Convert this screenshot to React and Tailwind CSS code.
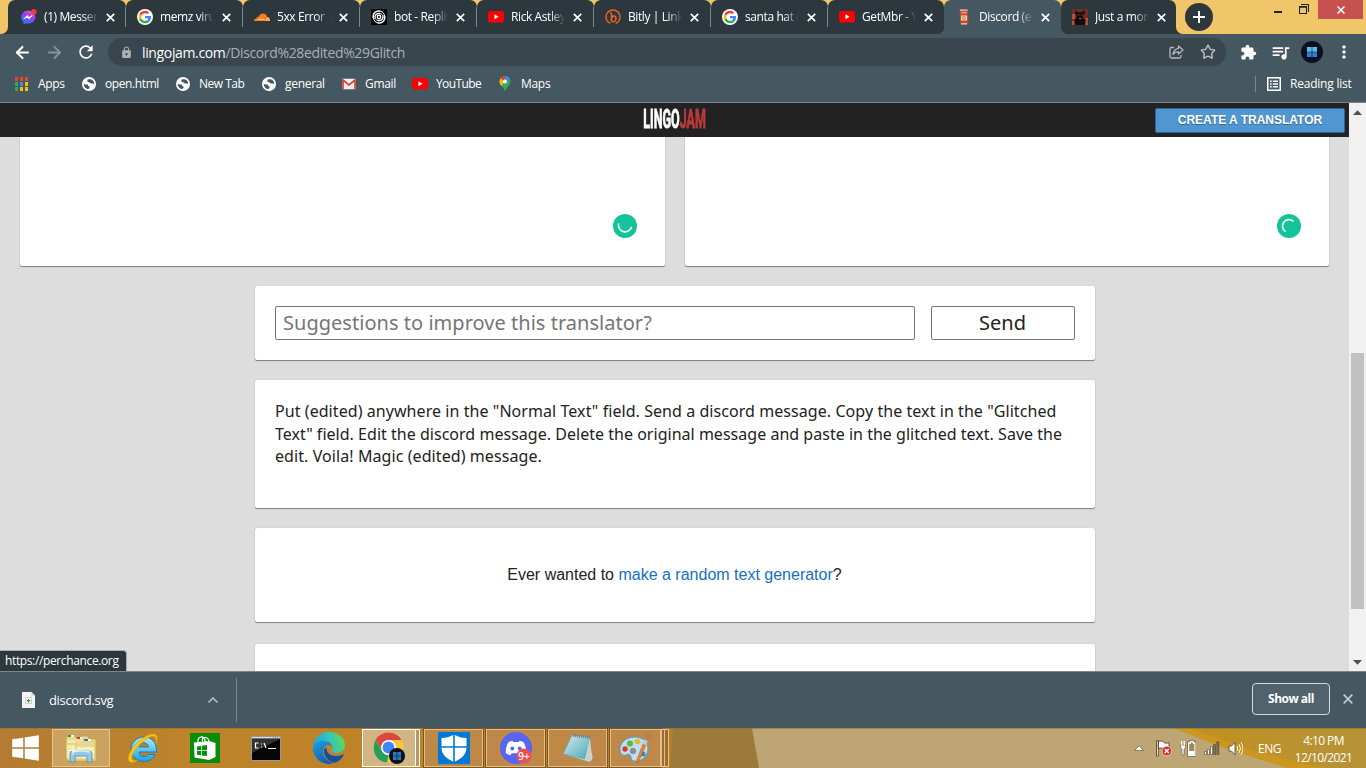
import React from "react";
import { ArrowLeft, ArrowRight, Star } from "lucide-react";
import { MdRefresh, MdExtension, MdQueueMusic, MdMoreVert, MdLock } from "react-icons/md";

const UI = "font-['Open_Sans','Noto_Sans',sans-serif]";

function GoogleIcon() {
  return (
    <svg width="16" height="16" viewBox="0 0 48 48" className="shrink-0">
      <circle cx="24" cy="24" r="24" fill="#fff" />
      <g transform="translate(5 5) scale(.79)">
        <path fill="#ea4335" d="M24 9.5c3.5 0 6.700 1.200 9.200 3.600l6.900-6.900C35.900 2.400 30.500 0 24 0 14.600 0 6.500 5.400 2.600 13.200l8 6.200C12.400 13.700 17.700 9.500 24 9.500z" />
        <path fill="#4285f4" d="M47 24.500c0-1.600-.2-3.100-.4-4.500H24v9h12.900c-.6 3-2.200 5.500-4.800 7.200l7.700 6C44.400 38 47 32 47 24.500z" />
        <path fill="#fbbc05" d="M10.500 28.600c-.5-1.500-.8-3-.8-4.600s.3-3.100.8-4.600l-8-6.200C.9 16.500 0 20.100 0 24s.9 7.500 2.600 10.800z" />
        <path fill="#34a853" d="M24 48c6.500 0 11.900-2.100 15.900-5.800l-7.700-6c-2.200 1.500-4.900 2.300-8.200 2.300-6.300 0-11.600-4.200-13.500-9.900l-8 6.200C6.500 42.600 14.600 48 24 48z" />
      </g>
    </svg>
  );
}

function YouTubeIcon() {
  return (
    <svg width="16" height="16" viewBox="0 0 16 16" className="shrink-0">
      <rect x="0" y="2" width="16" height="11.500" rx="2.800" fill="#f00" />
      <path d="M6.400 5.300v5l4.200-2.500z" fill="#fff" />
    </svg>
  );
}

function MessengerIcon() {
  return (
    <svg width="16" height="16" viewBox="0 0 16 16" className="shrink-0">
      <defs>
        <linearGradient id="msg" x1="0.200" y1="1" x2="0.800" y2="0">
          <stop offset="0" stopColor="#1687ff" />
          <stop offset="0.550" stopColor="#8f3dfb" />
          <stop offset="1" stopColor="#ff5e78" />
        </linearGradient>
      </defs>
      <path d="M7.300 1.400C3.300 1.400.3 4.200.3 8c0 2 .8 3.700 2.200 4.900V15.500l2.100-1.200c.9.200 1.700.3 2.700.3 4 0 7-2.800 7-6.600S11.300 1.400 7.300 1.400z" fill="url(#msg)" />
      <path d="M3 9.800l3-3.300 2.200 1.800 3-1.900-3 3.500-2.200-1.700z" fill="#fff" stroke="#fff" strokeWidth=".7" />
      <circle cx="12.900" cy="2.700" r="2.700" fill="#ef3b3b" />
    </svg>
  );
}

function CloudflareIcon() {
  return (
    <svg width="16" height="16" viewBox="0 0 16 16" className="shrink-0">
      <path d="M0 12c0-1.700 1-2.600 2.600-2.600C2.800 7.800 4 7.600 4.700 8c.8-2.500 2.300-3.600 4.300-3.600 2.300 0 3.700 1.500 4 3.500C15 8 16 9.800 16 12z" fill="#f38020" />
      <path d="M12.800 8l-1.600 4H16c0-2.200-1-4-3.200-4z" fill="#faae40" />
      <path d="M3.600 10.400l7-.1" stroke="#fff" strokeWidth=".5" />
    </svg>
  );
}

function SwirlIcon() {
  return (
    <svg width="16" height="16" viewBox="0 0 16 16" className="shrink-0">
      <rect width="16" height="16" fill="#050505" />
      <g fill="none" stroke="#fff">
        <circle cx="8" cy="8" r="1.700" strokeWidth="1.400" />
        <path d="M2.300 9C1.300 4.500 5 1.200 9.500 2.300M4.200 9.800C3 6.400 6 3.500 9.300 4.600M13.700 7c1 4.500-2.700 7.800-7.200 6.700M11.800 6.200c1.200 3.400-1.800 6.300-5.100 5.200" strokeWidth="1.400" />
        <path d="M9.300 2.200c2.500.5 4.200 2.600 4.300 5M6.700 13.800c-2.500-.5-4.200-2.600-4.300-5M9 4.500c1.300.4 2.400 1.200 2.800 2M7 11.500c-1.300-.4-2.400-1.200-2.800-2" strokeWidth="1" />
      </g>
    </svg>
  );
}

function BitlyIcon() {
  return (
    <svg width="16" height="16" viewBox="0 0 16 16" className="shrink-0" fill="none" stroke="#ee6123" strokeWidth="1.500">
      <path d="M5.500 14.300C2.800 13.300 1 10.900 1 8a7 7 0 0 1 14 0c0 2.900-1.800 5.300-4.300 6.300" />
      <path d="M5 3.800c1.200-.2 1.500.7 1.500 1.700v6" />
      <path d="M6.500 12V9.500c0-1.700 1-2.600 2.300-2.600 1.400 0 2.200 1 2.200 2.500 0 1.900-1.500 3.300-2.800 3.300-1 0-1.700-.3-1.700-.9z" />
    </svg>
  );
}

function CanIcon() {
  return (
    <svg width="16" height="16" viewBox="0 0 16 16" className="shrink-0">
      <path d="M4 .8h7.500l.5 1.700-.5 4 1 .5-.3 7-1 1.500H5L4.200 14 4 8 3.500 2z" fill="#cf4430" />
      <path d="M4 .5h7.500v1.300H4zM5 14.200h6v1.300H5z" fill="#dfd3c2" />
      <path d="M5 6.500h6v5H5z" fill="#ece2bd" />
      <path d="M5.200 3.800h5.500" stroke="#eecab0" strokeWidth="1" />
      <path d="M5.800 8h4M6.200 10h4" stroke="#8c5a38" strokeWidth=".8" />
    </svg>
  );
}

function DemonIcon() {
  return (
    <svg width="16" height="16" viewBox="0 0 16 16" className="shrink-0">
      <rect width="16" height="16" fill="#6e2e25" />
      <path d="M0 5h3v5H0zM13 9h3v7h-3zM0 12h2v4H0z" fill="#b85038" />
      <path d="M3.500 1l1.800 2.300h5L12.500 1l.3 3.500-1.800 1.700v2.300l2.700 2.500-.7 5H3.500L2.500 11l2-2.500.2-2.300L3 4.500z" fill="#120d0e" />
      <path d="M6 6h1.300M9 6h1.300M7 9.500h2.500" stroke="#e0402e" strokeWidth="1.100" />
    </svg>
  );
}

function GlobeIcon() {
  return (
    <svg width="14" height="14" viewBox="0 0 14 14" className="shrink-0">
      <circle cx="7" cy="7" r="7" fill="#fff" />
      <path d="M8.600 2.300H7.200C6 2.300 5.300 3 5.300 3.800c0 .9.400 1.400 1.500 1.500 1.200.1 1.200 1 2.400 1.100 1.200 0 2.300 0 3 .6.100-2.200-1.300-4.300-3.600-4.700zM1.700 6.400C1.600 8.600 2.800 11 5.200 11.900c1.300.4 2.300-.2 2.400-1.300.1-1-.6-1.200-1.200-1.500-.6-.4-.1-1.300-1-1.600-1.200-.3-2.600.1-3.700-1.100z" fill="#455760" />
    </svg>
  );
}

function AppsIcon() {
  const c = ["#ea4335", "#ea4335", "#ea4335", "#34a853", "#4285f4", "#fbbc05", "#34a853", "#fbbc05", "#fbbc05"];
  return (
    <svg width="14" height="14" viewBox="0 0 14 14" className="shrink-0">
      {c.map((f, i) => (
        <rect key={i} x={(i % 3) * 5} y={Math.floor(i / 3) * 5} width="3" height="4" fill={f} />
      ))}
    </svg>
  );
}

function GmailIcon() {
  return (
    <svg width="14" height="14" viewBox="0 0 14 14" className="shrink-0">
      <rect x="0" y="1.800" width="14" height="10.500" rx="1" fill="#f2f2f2" />
      <path d="M1 12V3l6 5 6-5v9" fill="none" stroke="#db3a2e" strokeWidth="1.700" />
      <path d="M2.500 12L6 8M11.500 12L8 8" stroke="#ccc" strokeWidth=".6" />
    </svg>
  );
}

function MapsIcon() {
  return (
    <svg width="14" height="16" viewBox="0 0 14 16" className="shrink-0">
      <path d="M7 15.800C6.500 13.500 5 12 3.500 10 2.300 8.500 1.500 7.300 1.500 5.500A5.500 5.500 0 0 1 12.500 5.500c0 1.900-.9 3.200-2 4.600C9 12 7.500 13.500 7 15.800z" fill="#34a853" />
      <path d="M2.700 2.200L7 5.500 3.400 10C2.200 8.400 1.500 7.300 1.500 5.500c0-1.300.5-2.400 1.200-3.300z" fill="#fbbc05" />
      <path d="M2.700 2.100C4 .5 6.500-.4 8.700.3L5 4.700z" fill="#ea4335" />
      <path d="M8.700.3c1.500.5 2.600 1.500 3.200 2.700L8.700 6.900 5.300 4.300z" fill="#4285f4" />
      <circle cx="7" cy="5.500" r="2" fill="#fff" />
    </svg>
  );
}

function Tab({ icon, title, shape, separator }) {
  return (
    <div className={"flex h-[34px] shrink-0 items-center rounded-t-[7px] " + shape}>
      {icon}
      <span className="ml-[7px] w-[54px] shrink-0 overflow-hidden whitespace-nowrap text-[12px] tracking-[-0.4px] text-white [mask-image:linear-gradient(90deg,#000_72%,transparent)]">
        {title}
      </span>
      <svg width="9" height="9" viewBox="0 0 9 9" className="ml-[8px] shrink-0">
        <path d="M.8.8l7.400 7.400M8.200.8L.8 8.200" stroke="#fff" strokeWidth="1.700" />
      </svg>
      {separator && <div className="ml-auto h-5 w-px bg-[#7d868b]" />}
    </div>
  );
}

const inner = "w-[117px] pl-[11px] bg-[#2d383e]";
const tabs = [
  [<MessengerIcon />, "(1) Messenger", "w-[118px] pl-[13px] bg-[#2d383e]"],
  [<GoogleIcon />, "memz virus", inner],
  [<CloudflareIcon />, "5xx Error | C", inner],
  [<SwirlIcon />, "bot - Replit", inner],
  [<YouTubeIcon />, "Rick Astley -", inner],
  [<BitlyIcon />, "Bitly | Link M", inner],
  [<GoogleIcon />, "santa hat d", inner],
  [<YouTubeIcon />, "GetMbr - Y", "w-[116px] pl-[11px] bg-[#2d383e]"],
];

function TabStrip() {
  return (
    <div className="flex h-[34px] bg-[#f0c668]">
      <div className="h-[34px] w-2 bg-[#2d383e]">
        <div className="h-full w-2 rounded-br-[7px] bg-[#f0c668]" />
      </div>
      <div className="flex bg-[linear-gradient(#f0c668_10px,#455760_10px)]">
        <div className="flex overflow-hidden rounded-br-[7px] bg-[linear-gradient(#f0c668_10px,#2d383e_10px)]">
          {tabs.map(([icon, title, shape], i) => (
            <Tab key={title} icon={icon} title={title} shape={shape} separator={i < tabs.length - 1} />
          ))}
        </div>
        <Tab icon={<CanIcon />} title="Discord (edi" shape="w-[117px] pl-[12px] bg-[#455760]" />
        <Tab icon={<DemonIcon />} title="Just a mom" shape="w-[115px] rounded-bl-[7px] pl-[11px] bg-[#2d383e]" />
      </div>
      <div className="h-[34px] w-2 bg-[#2d383e]">
        <div className="h-full w-2 rounded-bl-[7px] bg-[#f0c668]" />
      </div>
      <div className="mt-[3px] ml-px flex h-7 w-7 items-center justify-center rounded-full bg-[#2d383e]">
        <svg width="12" height="12" viewBox="0 0 12 12">
          <path d="M6 0v12M0 6h12" stroke="#fff" strokeWidth="2" />
        </svg>
      </div>
      <div className="ml-auto flex items-start pr-[3px]">
        <div className="mt-[11px] mr-[17px] h-[2px] w-2 bg-[#222]" />
        <svg width="10" height="10" viewBox="0 0 10 10" className="mt-1 mr-[9px]" fill="none" stroke="#222">
          <path d="M2 .5h7.500V8M.5 2.500h7v7h-7zM.5 3.300h7" strokeWidth="1.100" />
        </svg>
        <div className="flex h-[19px] w-[45px] items-center justify-center bg-[#c75050]">
          <svg width="8" height="8" viewBox="0 0 8 8">
            <path d="M.5.5l7 7M7.500.5l-7 7" stroke="#fff" strokeWidth="1.500" />
          </svg>
        </div>
      </div>
    </div>
  );
}

function Toolbar() {
  return (
    <div className="flex h-9 items-center pl-[13px]">
      <ArrowLeft size={19} strokeWidth={2.600} color="#fff" className="shrink-0" />
      <ArrowRight size={19} strokeWidth={2.400} color="#899399" className="ml-[13px] shrink-0" />
      <MdRefresh size={20} color="#fff" className="ml-[12px] shrink-0" />
      <div className="ml-[12px] flex h-7 w-[1118px] shrink-0 items-center rounded-full bg-[#39464d] pr-[10px] pl-[12px]">
        <MdLock size={13} color="#aab0b4" />
        <span className="ml-[9px] text-[14px] tracking-[-0.36px] text-[#a9b0b4]">
          <span className="text-white">lingojam.com</span>/Discord%28edited%29Glitch
        </span>
        <svg width="15" height="14" viewBox="0 0 15 14" className="ml-auto" fill="none" stroke="#b4babd" strokeWidth="1.300">
          <path d="M5 2.500H2.500Q1 2.500 1 4v7.500Q1 13 2.500 13h8q1.500 0 1.500-1.500V10" />
          <path d="M9.500 1l4.500 4-4.500 4V6.800C7 6.700 5.300 7.500 4 9.500 4.400 6 6 3.700 9.500 3.300z" strokeLinejoin="round" />
        </svg>
        <Star size={16} strokeWidth={2.200} color="#b4babd" className="ml-[16px]" />
      </div>
      <MdExtension size={17} color="#fff" className="ml-[14px] shrink-0" />
      <MdQueueMusic size={21} color="#fff" className="ml-[13px] shrink-0" />
      <svg width="22" height="22" viewBox="0 0 22 22" className="ml-[10px] shrink-0">
        <circle cx="11" cy="11" r="11" fill="#0b1120" />
        <path d="M6 6h4.700v4.700H6zM11.300 6H16v4.700h-4.700z" fill="#62b6f2" />
        <path d="M6 11.300h4.700V16H6zM11.300 11.300H16V16h-4.700z" fill="#2a7fd0" />
      </svg>
      <MdMoreVert size={20} color="#fff" className="ml-[11px] shrink-0" />
    </div>
  );
}

function Mark({ icon, label, box, gap }) {
  return (
    <div className={"flex shrink-0 items-center " + box}>
      {icon}
      <span className={"whitespace-nowrap " + gap}>{label}</span>
    </div>
  );
}

function Bookmarks() {
  return (
    <div className="flex h-7 items-center pl-[15px] text-[12px] tracking-[-0.3px] text-white">
      <Mark icon={<AppsIcon />} label="Apps" box="w-[67px]" gap="ml-[9px]" />
      <Mark icon={<GlobeIcon />} label="open.html" box="w-[94px]" gap="ml-[9px] tracking-[-0.4px]" />
      <Mark icon={<GlobeIcon />} label="New Tab" box="w-[86px]" gap="ml-[9px] tracking-[-0.5px]" />
      <Mark icon={<GlobeIcon />} label="general" box="w-[80px]" gap="ml-[9px]" />
      <Mark icon={<GmailIcon />} label="Gmail" box="w-[70px]" gap="ml-[9px]" />
      <Mark icon={<YouTubeIcon />} label="YouTube" box="w-[86px]" gap="ml-[8px] tracking-[-0.6px]" />
      <Mark icon={<MapsIcon />} label="Maps" box="w-[70px]" gap="ml-[9px]" />
      <div className="ml-auto h-4 w-px bg-[#7b888e]" />
      <svg width="14" height="14" viewBox="0 0 14 14" className="ml-[11px]" fill="none" stroke="#fff">
        <rect x=".8" y=".8" width="12.400" height="12.400" strokeWidth="1.500" />
        <path d="M3 4.200h1.700M3 7h1.700M3 9.800h1.700M5.800 4.200H11M5.800 7H11M5.800 9.800H11" strokeWidth="1.600" />
      </svg>
      <span className="mr-[14px] ml-[9px] w-[62px] whitespace-nowrap tracking-[-0.22px]">Reading list</span>
    </div>
  );
}

const card = "rounded-[2px] bg-white shadow-[0_1px_1px_rgba(0,0,0,0.42),0_0_1px_rgba(0,0,0,0.2)]";

function WebPage() {
  return (
    <div className="flex h-[568px] bg-[#ddd]">
      <div className="flex w-[1349px] flex-col overflow-hidden">
        <header className="grid h-[34px] shrink-0 grid-cols-[1fr_64px_1fr] items-center bg-[#222]">
          <div />
          <div className="flex w-[64px] items-center justify-center">
            <span className="h-[30px] shrink-0 origin-center scale-x-[0.5] font-['Roboto',sans-serif] text-[25px] leading-[30px] font-bold text-white [-webkit-text-stroke:0.900px_#fff]">
              LINGO<span className="text-[#b93a3a] [-webkit-text-stroke:0.900px_#b93a3a]">JAM</span>
            </span>
          </div>
          <button className="mr-1 flex h-[25px] w-[190px] items-center justify-center justify-self-end rounded-[2px] border border-[#23699f] bg-[#5097d1] font-['Liberation_Sans',sans-serif] text-[12px] font-bold text-white [text-shadow:0_1px_1px_rgba(0,0,0,0.35)]">
            CREATE A TRANSLATOR
          </button>
        </header>
        <div className="flex h-[129px] shrink-0 gap-5 pl-5">
          <div className={"flex h-[129px] w-[645px] items-end justify-end rounded-t-none pr-7 pb-7 " + card}>
            <svg width="24" height="24" viewBox="0 0 24 24">
              <circle cx="12" cy="12" r="12" fill="#15c39a" />
              <path d="M5.500 10.200a6.700 6.700 0 0 0 12.900 3.300" fill="none" stroke="#e3f8f2" strokeWidth="1.700" strokeLinecap="round" />
            </svg>
          </div>
          <div className={"flex h-[129px] w-[644px] items-end justify-end rounded-t-none pr-7 pb-7 " + card}>
            <svg width="24" height="24" viewBox="0 0 24 24">
              <circle cx="12" cy="12" r="12" fill="#15c39a" />
              <path d="M16 7a6.300 6.300 0 0 0-8 10.200" fill="none" stroke="#e3f8f2" strokeWidth="1.700" strokeLinecap="round" />
            </svg>
          </div>
        </div>
        <main className="ml-[255px] flex w-[840px] flex-col pt-5">
          <section className={"flex h-[74px] shrink-0 gap-4 p-5 font-['Noto_Sans',sans-serif] text-[20px] " + card}>
            <div className="flex h-[34px] w-[640px] items-center rounded-[2px] border border-[#767676] pl-[7px] tracking-[0.03px] text-[#757575]">
              Suggestions to improve this translator?
            </div>
            <div className="flex h-[34px] w-[144px] items-center justify-center rounded-[2px] border border-[#767676] pr-px text-[#222]">Send</div>
          </section>
          <section className={"mt-5 h-[128px] shrink-0 px-5 pt-5 font-['Noto_Sans',sans-serif] text-[16px] leading-[22.500px] whitespace-nowrap text-[#222] " + card}>
            <p>
              <span className="tracking-[0.065px]">
                Put (edited) anywhere in the "Normal Text" field. Send a discord message. Copy the text in the "Glitched
              </span>
              <br />
              <span className="tracking-[0.023px]">
                Text" field. Edit the discord message. Delete the original message and paste in the glitched text. Save the
              </span>
              <br />
              <span className="tracking-[0.080px]">edit. Voila! Magic (edited) message.</span>
            </p>
          </section>
          <section className={"mt-5 flex h-[94px] shrink-0 items-center justify-center pr-px font-['Liberation_Sans',sans-serif] text-[16px] text-[#222] " + card}>
            <p>
              Ever wanted to <span className="text-[#1570c4]">make a random text generator</span>?
            </p>
          </section>
          <section className={"mt-[22px] h-[60px] shrink-0 " + card} />
        </main>
      </div>
      <div className="flex w-[17px] flex-col items-center bg-[#f1f1f1]">
        <svg width="9" height="5" viewBox="0 0 9 5" className="mt-[7px]">
          <path d="M0 5l4.500-4.800L9 5z" fill="#505050" />
        </svg>
        <div className="mt-[238px] h-[256px] w-[13px] bg-[#c1c1c1]" />
        <svg width="9" height="5" viewBox="0 0 9 5" className="mt-[51px]">
          <path d="M0 0l4.500 4.800L9 0z" fill="#505050" />
        </svg>
      </div>
    </div>
  );
}

function Downloads() {
  return (
    <div className="flex h-[57px] items-center border-t border-[#7a878d] bg-[#455760]">
      <div className="flex h-11 w-[237px] items-center border-r border-[#7a878d] pl-[22px]">
        <svg width="13" height="16" viewBox="0 0 13 16" className="mb-px">
          <path d="M0 0h9.500L13 3.500V16H0z" fill="#f4f4f2" />
          <path d="M9.500 0v3.500H13z" fill="#c9cdcd" />
          <path d="M3.500 5.500h6v6h-6z" fill="#fff" stroke="#bbb" strokeWidth=".7" />
          <path d="M6.500 7v3.500M4.800 8.700h3.500" stroke="#2c9a3c" strokeWidth="1.200" />
        </svg>
        <span className="mt-0.5 ml-[14px] text-[13px] tracking-[-0.33px] text-white">discord.svg</span>
        <svg width="10" height="6" viewBox="0 0 10 6" className="mr-[18px] ml-auto">
          <path d="M.6 5.400L5 1l4.400 4.400" fill="none" stroke="#b9c0c3" strokeWidth="1.500" />
        </svg>
      </div>
      <button className="mr-[13px] mb-0.5 ml-auto flex h-8 w-[78px] items-center justify-center rounded-[4px] border border-[#d5dadc] bg-[#50626b] text-[12px] font-bold tracking-[-0.5px] text-white">
        Show all
      </button>
      <svg width="10" height="10" viewBox="0 0 10 10" className="mr-[13px] mb-0.5">
        <path d="M.7.7l8.600 8.600M9.300.7L.7 9.300" stroke="#c4cacc" strokeWidth="1.700" />
      </svg>
    </div>
  );
}

function Explorer() {
  return (
    <svg width="33" height="30" viewBox="0 0 33 30">
      <path d="M1 26V5l2-2h7l1 2h5l1-2h6l1 3h7v22H4z" fill="#ead98b" stroke="#bfa246" strokeWidth=".8" />
      <path d="M2 7h16v18H2z" fill="#f4e9a8" />
      <path d="M11 9h19v17H11z" fill="#f7efb5" stroke="#d2b95c" strokeWidth=".7" />
      <path d="M2 11h28M11 13h19" stroke="#d8c26b" />
      <path d="M4 3h5M12 5h5M20 7h6" stroke="#fff" strokeWidth="2" />
      <path d="M3 3h3" stroke="#23a33a" strokeWidth="2" />
      <path d="M12 5h3" stroke="#de3f24" strokeWidth="2" />
      <path d="M19 7h4" stroke="#1c80d6" strokeWidth="2" />
      <path d="M5 29v-8q0-3 3-3h16q3 0 3 3v8h-5v-6H10v6z" fill="#94c8e8" stroke="#4b8dbd" strokeWidth=".8" />
      <path d="M7 19q8-2 18 0" stroke="#d9f1ff" strokeWidth="1.300" fill="none" />
      <path d="M8 13v9M4 17.500h8" stroke="#fffbe0" strokeWidth=".9" />
    </svg>
  );
}

function InternetExplorer() {
  return (
    <svg width="34" height="32" viewBox="0 0 34 32">
      <defs>
        <linearGradient id="ie" x1="0" y1="0" x2="0" y2="1">
          <stop offset="0" stopColor="#a9ebfc" />
          <stop offset="1" stopColor="#18a5e3" />
        </linearGradient>
      </defs>
      <path d="M29 22.500c-2 4.500-6 7-11 7C11 29.500 5 24.500 5 17.500S11 5 18 5s12.500 5 12.500 13v2H13c.3 3 2.200 4.500 5 4.500 2.200 0 3.500-.5 4.500-2zM13 15h9.500c-.3-2.500-2.200-4.300-4.700-4.300S13.300 12.500 13 15z" fill="url(#ie)" stroke="#1780b9" strokeWidth="1" />
      <path d="M30 12c1.500-4 2-8-.5-9.500C25-0 13 7 7 15.500 2 22.500 1 28.500 4 30c2 1 5 0 8-2-3 1-5.500.8-6-1-1-3.500 3-10.500 9-15.500C21 6 26.500 3 28.800 4.800c1.500 1.200 1.500 4 1.200 7.200z" fill="#f9c515" stroke="#d99c08" strokeWidth=".5" />
    </svg>
  );
}

function StoreIcon() {
  return (
    <svg width="30" height="30" viewBox="0 0 30 30">
      <rect width="30" height="30" fill="#078d07" />
      <path d="M4 9.500l15.500-1.500L25.500 10V24L19 27 4.500 24.500z" fill="#fff" />
      <path d="M8 10V7.500q0-3 3-3.500t4 3v3M12.500 8.500q-1-4 2.500-4t4 4" fill="none" stroke="#fff" strokeWidth="1.200" />
      <path d="M7 13.500l4.200-.6v4.400H7zM12 12.800l5-.7v5.200h-5zM7 18h4.200v4.300L7 21.700zM12 18h5v5.100l-5-.7z" fill="#078d07" />
    </svg>
  );
}

function CmdIcon() {
  return (
    <svg width="30" height="25" viewBox="0 0 30 25">
      <rect x=".5" y=".5" width="29" height="24" fill="#050505" stroke="#9a9a94" />
      <path d="M1 1h28v1.500H1z" fill="#d9dde0" />
      <path d="M22 1.800h5" stroke="#5779ad" strokeDasharray="1 1" />
      <path d="M1 3h28L1 17z" fill="#fff" opacity=".18" />
      <path d="M7.500 7h-3v5h3M10 8h1M10 11h1M13 7l2 5M17 12.500h8" fill="none" stroke="#fff" strokeWidth="1.200" />
    </svg>
  );
}

function EdgeIcon() {
  return (
    <svg width="32" height="32" viewBox="0 0 32 32">
      <defs>
        <linearGradient id="e1" x1="0" y1="0.400" x2="1" y2="0.200">
          <stop offset="0" stopColor="#1fa5e8" />
          <stop offset="0.500" stopColor="#32c3c0" />
          <stop offset="1" stopColor="#66dc4d" />
        </linearGradient>
        <linearGradient id="e2" x1="0" y1="0" x2="0.600" y2="1">
          <stop offset="0" stopColor="#1ba1e2" />
          <stop offset="1" stopColor="#0b5fb4" />
        </linearGradient>
      </defs>
      <path d="M0 16C0 7 7 0 16 0s16 6 16 13c0 5-4 8-8.500 8-4 0-5.500-1.500-5-2.500 2-2 1.500-6-2.500-8C10 8 2 10 0 16z" fill="url(#e1)" />
      <path d="M0 16C2 9.500 9 7.500 14 9.500c3 1.200 5 3.500 5 6-1-2-3-3-5-2.500C9 15 8 23 14 28c3 2.500 6 3 8 2.800C13 34.500 0 29 0 16z" fill="url(#e2)" />
      <path d="M11 17.500C10 24 15 30 22 30.800c4-1.500 7-4.300 8.600-7.600.3-.7-.3-1.200-1-.8C22 26 13 23.500 13.500 15.500c-1.500.6-2.300 1.200-2.500 2z" fill="#14509f" />
    </svg>
  );
}

function ChromeIcon() {
  return (
    <svg width="32" height="32" viewBox="0 0 32 32">
      <circle cx="15.500" cy="15.500" r="15" fill="#f8c63a" />
      <path d="M2.500 8A15 15 0 0 1 28.500 8H15.500L9 19z" fill="#d9483f" />
      <path d="M2.500 8L9 19.300c1.300 2.300 3.700 3.700 6.500 3.700L14 30.500C2 29.500-2 17 2.500 8z" fill="#25a05a" />
      <circle cx="15.500" cy="15.500" r="7.500" fill="#fff" />
      <circle cx="15.500" cy="15.500" r="5.900" fill="#4285f4" />
      <circle cx="24" cy="24" r="8" fill="#0c111b" />
      <path d="M20 20h3.700v3.700H20zM24.300 20H28v3.700h-3.700zM20 24.300h3.700V28H20zM24.300 24.300H28V28h-3.700z" fill="#2b78bd" />
    </svg>
  );
}

function DefenderIcon() {
  return (
    <svg width="32" height="32" viewBox="0 0 32 32">
      <rect width="32" height="32" fill="#0078d7" />
      <path d="M16 2.500C12 5 8 6 3.500 6v9.500C3.500 23 9 27 16 30c7-3 12.500-7 12.500-14.500V6C24 6 20 5 16 2.500z" fill="#fff" />
      <path d="M16 2v28M3 15h26" stroke="#0078d7" strokeWidth="1.600" />
    </svg>
  );
}

function DiscordIcon() {
  return (
    <svg width="32" height="32" viewBox="0 0 32 32">
      <circle cx="16" cy="16" r="16" fill="#5865f2" />
      <path d="M12.500 8.800l.7 1.200h5.600l.7-1.200c1.600.3 3 .8 4 1.400 2 3 3 7 2.700 10.800-1.200 1-3 1.800-4.700 2.200l-1.200-2h-8.600l-1.200 2C8.800 22.800 7 22 5.800 21 5.500 17.200 6.500 13.200 8.500 10.200c1-.6 2.400-1.100 4-1.400z" fill="#fff" />
      <circle cx="12.300" cy="16.500" r="1.900" fill="#5865f2" />
      <circle cx="19.700" cy="16.500" r="1.900" fill="#5865f2" />
      <circle cx="24" cy="24" r="7.500" fill="#e94f55" />
      <text x="24" y="27.500" textAnchor="middle" fontSize="10" fontWeight="600" fontFamily="Open Sans" fill="#fff">9+</text>
    </svg>
  );
}

function NotepadIcon() {
  return (
    <svg width="32" height="32" viewBox="0 0 32 32">
      <defs>
        <linearGradient id="np" x1="0" y1="0" x2="1" y2="1">
          <stop offset="0" stopColor="#d5eef0" />
          <stop offset="1" stopColor="#4ba6b5" />
        </linearGradient>
      </defs>
      <path d="M26 4l5 22-4 4L4 23z" fill="#d9dcd8" stroke="#8a8e88" strokeWidth=".6" />
      <path d="M10 3l18 2-5 22L1 22z" fill="url(#np)" stroke="#5d9aa5" strokeWidth=".6" />
      <path d="M23 27l5-22 2 23-3 2z" fill="#c9d0ce" />
      <path d="M11 3.500l18 2" stroke="#757b78" strokeWidth="3" strokeDasharray="1 1" />
    </svg>
  );
}

function PaintIcon() {
  return (
    <svg width="34" height="32" viewBox="0 0 34 32">
      <path d="M16 5C6 5 0 12 1 19c.5 4 4 5 6 4 3-1.500 5 0 5 2.500 0 3 3 4.500 7 3.500 6-1.500 10-6 10-13C29 9 23 5 16 5z" fill="#b9dff2" stroke="#4c9ac9" strokeWidth="1" />
      <circle cx="14" cy="19" r="2.700" fill="#af875a" stroke="#5c9cc2" />
      <circle cx="6" cy="17" r="2.700" fill="#df382d" />
      <circle cx="11" cy="11.500" r="3" fill="#5bb83b" />
      <circle cx="18.500" cy="9.500" r="2.800" fill="#f3b51c" />
      <circle cx="24" cy="22" r="2.500" fill="#2e86d6" />
      <path d="M17 30L24 12l3 1-8 18z" fill="#ef8323" stroke="#b85612" strokeWidth=".5" />
      <path d="M24 12l1.500-6 4 1.500L27 13z" fill="#c4c7c5" />
      <path d="M25 7c0-3 2-5 1-7 3 2 8 1 7 4-.5 2-3 3-4 5z" fill="#b98246" />
    </svg>
  );
}

function Taskbar() {
  const frame = "flex h-[38px] shrink-0 items-center justify-center border border-[#dcc08d] bg-[#bd8848] outline outline-[#80551a]";
  return (
    <div className="relative h-10 overflow-hidden">
      <svg width="1366" height="40" viewBox="0 0 1366 40" className="absolute inset-0">
        <defs>
          <linearGradient id="wl" x1="0" x2="1" y1="0" y2="0">
            <stop offset="0" stopColor="#b57c32" />
            <stop offset="0.300" stopColor="#bd842b" />
            <stop offset="0.550" stopColor="#be8227" />
            <stop offset="1" stopColor="#b97d2c" />
          </linearGradient>
          <linearGradient id="wr" x1="0" x2="1" y1="0" y2="0">
            <stop offset="0" stopColor="#c19020" />
            <stop offset="1" stopColor="#b69338" />
          </linearGradient>
        </defs>
        <rect width="674" height="40" fill="url(#wl)" />
        <path d="M673 0h85l6 40H670z" fill="#9c7b3a" />
        <path d="M752 0h614v40H759z" fill="#bea574" />
        <path d="M1174 0h192v40h-78C1250 29 1214 17 1174 0z" fill="#cb971e" />
        <path d="M1190 0h176v40h-42C1274 30 1230 16 1190 0z" fill="url(#wr)" />
        <path d="M0 .5h1366" stroke="#8f7038" opacity=".6" />
      </svg>
      <div className="relative flex h-10 items-center">
        <svg width="27" height="26" viewBox="0 0 27 26" className="mr-[13px] ml-3">
          <path d="M0 4l11.500-1.600v10.100H0zM12.500 2.200L27 0v12.500H12.500zM0 13.500h11.500v10.100L0 22zM12.500 13.500H27V26l-14.500-2.200z" fill="#fff" stroke="#80551a" strokeWidth=".3" />
        </svg>
        <div className="flex h-[38px] w-[58px] items-center justify-center border border-[#dfc593] bg-[#cba260]"><Explorer /></div>
        <div className="ml-[16px] w-[34px]"><InternetExplorer /></div>
        <div className="ml-[30px]"><StoreIcon /></div>
        <div className="ml-[31px]"><CmdIcon /></div>
        <div className="ml-[32px]"><EdgeIcon /></div>
        <div className="ml-[17px] flex">
          <div className="flex h-[38px] w-[54px] items-center justify-center border border-white bg-[#d1b584]"><ChromeIcon /></div>
          <div className="h-[38px] w-1 border border-l-0 border-white bg-[#b99763]" />
        </div>
        <div className={"ml-1 w-[59px] " + frame}><DefenderIcon /></div>
        <div className={"ml-[3px] w-[59px] " + frame}><DiscordIcon /></div>
        <div className={"ml-[3px] w-[59px] " + frame}><NotepadIcon /></div>
        <div className={"ml-[3px] w-[51px] " + frame}><PaintIcon /></div>
        <div className="h-[38px] w-1 border border-[#dcc08d] bg-[#a06a2c]" />
        <div className="h-[38px] w-1 border border-l-0 border-[#dcc08d] bg-[#a06a2c]" />
        <svg width="10" height="6" viewBox="0 0 10 6" className="ml-auto shrink-0">
          <path d="M.5 5.500L5 .7l4.500 4.800z" fill="#fff" stroke="#6a5a38" strokeWidth=".7" />
        </svg>
        <svg width="18" height="18" viewBox="0 0 18 18" className="ml-[11px] shrink-0">
          <path d="M1.500 1.500h1.800V17H1.500zM3.300 2.500C6 1.500 8 2 9 3.500c1.500 1 3 1 5 0V10c-2 1-3.500 1-5 0-1.500-1-3-1.200-5.700-.5z" fill="#fff" stroke="#51462f" strokeWidth=".9" />
          <circle cx="11.800" cy="12" r="4.800" fill="#d8322c" stroke="#fff" strokeWidth=".5" />
          <path d="M9.800 10l4 4M13.800 10l-4 4" stroke="#fff" strokeWidth="1.400" />
        </svg>
        <svg width="16" height="17" viewBox="0 0 16 17" className="ml-[7px] shrink-0">
          <path d="M8.500 3h1.800V1.500h3V3H15v12.500H8.500z" fill="#a2875c" stroke="#4d422d" strokeWidth="2.400" />
          <path d="M8.500 3h1.800V1.500h3V3H15v12.500H8.500z" fill="#a2875c" stroke="#fff" strokeWidth="1.300" />
          <path d="M9 11h5.500v4H9z" fill="#fff" />
          <path d="M.5 5h5v3l-1.500 1v6H2V9L.5 8z" fill="#fff" stroke="#4d422d" strokeWidth=".5" />
          <path d="M1.700 1v4M4.300 1v4" stroke="#fff" strokeWidth="1.200" />
        </svg>
        <svg width="16" height="14" viewBox="0 0 16 14" className="ml-[8px] shrink-0" stroke="#4d422d" strokeWidth=".6">
          <path d="M.5 10.500h2v3h-2zM3.500 8.500h2v5h-2zM6.500 6h2v7.500h-2z" fill="#fff" />
          <path d="M9.500 3.500h2v10h-2zM12.800.8h2v12.700h-2z" fill="#81755f" />
        </svg>
        <svg width="15" height="15" viewBox="0 0 15 15" className="ml-[8px] shrink-0">
          <path d="M1 5h2.500L7 1.200v12.600L3.500 10H1z" fill="#fff" stroke="#4d422d" strokeWidth=".8" />
          <path d="M9 5q1.500 2.500 0 5M11 3.200q3 4.300 0 8.600M13 1.500q4 6 0 12" fill="none" stroke="#fff" strokeWidth="1" />
        </svg>
        <span className="mt-0.5 ml-[15px] w-[24px] text-[12px] tracking-[-0.5px] text-white">ENG</span>
        <div className="mt-0.5 mr-[13px] ml-[12px] flex w-[59px] flex-col items-center text-[12px] leading-[17px] tracking-[-0.6px] whitespace-nowrap text-white">
          <span>4:10 PM</span>
          <span>12/10/2021</span>
        </div>
      </div>
    </div>
  );
}

export default function App() {
  return (
    <div className={"relative h-[768px] w-[1366px] overflow-hidden bg-[#455760] " + UI}>
      <TabStrip />
      <div className="h-[69px] border-b border-[#75828a] bg-[#455760]">
        <Toolbar />
        <Bookmarks />
      </div>
      <WebPage />
      <Downloads />
      <Taskbar />
      <div className="absolute top-[650px] left-0 flex h-[21px] w-[127px] items-center rounded-tr-[4px] border-t border-r border-[#a8acae] bg-[#2d383e] pl-[5px] text-[12px] tracking-[-0.37px] text-white">
        https://perchance.org
      </div>
    </div>
  );
}
